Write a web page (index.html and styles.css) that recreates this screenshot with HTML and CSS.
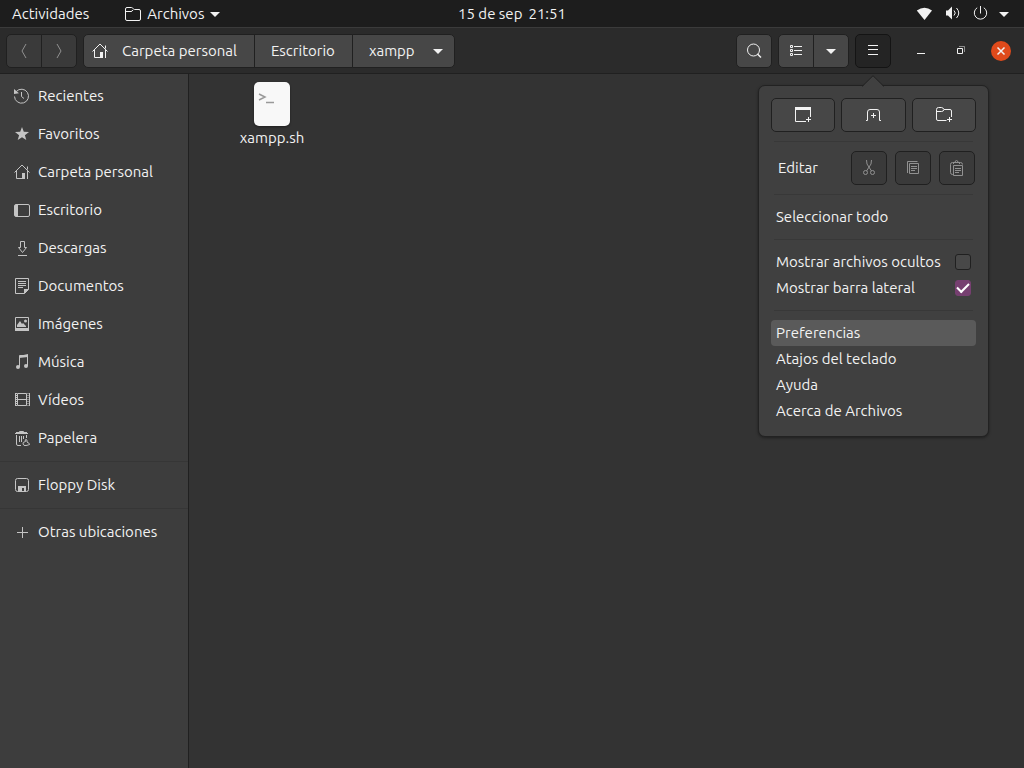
FILE: index.html
```html
<!DOCTYPE html>
<html lang="es">
<head>
<meta charset="utf-8">
<meta name="viewport" content="width=device-width, initial-scale=1">
<title>Archivos</title>
<link rel="stylesheet" href="styles.css">
</head>
<body>
<svg class="symbols" aria-hidden="true">
  <symbol id="home" viewBox="0 0 16 16">
    <path class="line" d="M.5 8.500 8 1l7.500 7.500M13.500 2.500v3M2.500 7v7.500h6M13.500 7v8"/>
    <path class="solid" d="M8 9h3v6H8z"/>
  </symbol>
  <symbol id="caret" viewBox="0 0 16 16"><path class="solid" d="M3 6h10l-5 5z"/></symbol>
</svg>

<header class="topbar">
  <div class="topbar-start">
    <button class="top-button">Actividades</button>
    <button class="top-button app-menu">
      <svg class="icon" viewBox="0 0 16 16"><path class="line" d="M2 1.500h4.500q1 0 1.500 1t1.500 1H14q1.500 0 1.500 1.500v8q0 1.500-1.500 1.500H2Q.5 14.500.5 13V3Q.5 1.500 2 1.500zM.5 5.500H6q1 0 2-1.500"/></svg>
      <span>Archivos</span>
      <svg class="icon caret-icon"><use href="#caret"/></svg>
    </button>
  </div>
  <button class="top-button clock"><span>15 de sep</span><span>21:51</span></button>
  <button class="top-button status" aria-label="Sistema">
    <svg class="icon" viewBox="0 0 16 16"><path class="solid" d="M.8 4.500Q8.500-1 16 4.500L8.500 14z"/></svg>
    <svg class="icon" viewBox="0 0 16 16"><path class="solid" d="M2 4.500h2L8 .5v13l-4-4H2z"/><path class="line" d="M10 4.500q2.500 2.500 0 5M12.500 2q4.500 5 0 10"/></svg>
    <svg class="icon" viewBox="0 0 16 16"><path class="line" d="M8.500 0v7.500M5.200 1.700a6.200 6.200 0 1 0 6.600 0"/></svg>
    <svg class="icon caret-icon"><use href="#caret"/></svg>
  </button>
</header>

<div class="headerbar">
  <div class="linked">
    <button class="button dim" aria-label="Atrás"><svg class="icon" viewBox="0 0 16 16"><path class="line" d="M10 1 6 8l4 7"/></svg></button>
    <button class="button dim" aria-label="Adelante"><svg class="icon" viewBox="0 0 16 16"><path class="line" d="m6 1 4 7-4 7"/></svg></button>
  </div>
  <nav class="linked path" aria-label="Ruta">
    <button class="button crumb crumb-home"><svg class="icon"><use href="#home"/></svg><span>Carpeta personal</span></button>
    <button class="button crumb">Escritorio</button>
    <button class="button crumb crumb-current"><span>xampp</span><svg class="icon"><use href="#caret"/></svg></button>
  </nav>
  <div class="header-end">
    <button class="button" aria-label="Buscar"><svg class="icon" viewBox="0 0 16 16"><circle class="line" cx="7.500" cy="7" r="6"/><path class="line medium" d="m11.500 11 3.500 3.500"/></svg></button>
    <div class="linked">
      <button class="button" aria-label="Vista de lista"><svg class="icon" viewBox="0 0 16 16"><path class="line" d="M2.500 2.500h2v2h-2zM2.500 6.500h2v2h-2zM2.500 10.500h2v2h-2zM6 3.500h8M6 7.500h8M6 11.500h8"/></svg></button>
      <button class="button" aria-label="Opciones de vista"><svg class="icon"><use href="#caret"/></svg></button>
    </div>
    <div class="menu-anchor">
      <button class="button active" aria-label="Menú" aria-expanded="true"><svg class="icon" viewBox="0 0 16 16"><path class="line" d="M3 2.500h10M3 6.500h10M3 11.500h10"/></svg></button>
      <section class="popover" aria-label="Menú principal">
        <svg class="arrow" viewBox="0 0 22 12"><path class="arrow-fill" d="M0 12 11 1l11 11z"/><path class="arrow-edge" d="M0 11.500 11 .7l11 10.800"/></svg>
        <div class="new-row">
          <button class="button" aria-label="Nueva ventana"><svg class="icon" viewBox="0 0 16 16"><path class="solid" d="M0 0h16v3H0z"/><path class="line" d="M.5 2v12.500H11M15.500 2v8M13.500 10v5M11 12.500h5"/></svg></button>
          <button class="button" aria-label="Nueva pestaña"><svg class="icon" viewBox="0 0 16 16"><path class="line" d="M1 13.500h1.500V5q0-2.500 2.500-2.500h7Q14.500 2.500 14.500 5v8.500H16M8.500 6v5M6 8.500h5"/></svg></button>
          <button class="button" aria-label="Nueva carpeta"><svg class="icon" viewBox="0 0 16 16"><path class="line" d="M10.500 13.500H2Q.5 13.500.5 12V2.500Q.5.5 2.500.5h3Q7 .5 8 2.500h6q1.500 0 1.500 1.500v6M.5 4.500h5q2 0 2.500-2M13.500 10v5M11 12.500h5"/></svg></button>
        </div>
        <hr class="rule">
        <div class="edit-row">
          <span>Editar</span>
          <button class="button dim" aria-label="Cortar"><svg class="icon" viewBox="0 0 16 16"><path class="line" d="m5.500 0 .5 4 4.500 7M10.500 0 10 4l-4.500 7"/><circle class="line" cx="4.500" cy="12.500" r="2"/><circle class="line" cx="11.500" cy="12.500" r="2"/></svg></button>
          <button class="button dim" aria-label="Copiar"><svg class="icon" viewBox="0 0 16 16"><path class="line" d="M2.500 13V1.500h10M4.500 3.500h9v10h-9zM6 6.500h6M6 8.500h6M6 10.500h4"/></svg></button>
          <button class="button dim" aria-label="Pegar"><svg class="icon" viewBox="0 0 16 16"><path class="line" d="M4 14.500h-.5Q1.500 14.500 1.500 12.500V4.500q0-2 2-2h8q2 0 2 2M4.500 4V2.500H6Q6 .5 7.500.5T9 2.500h1.500V4M4.500 5.500h9v10h-9zM6 8.500h6M6 10.500h6M6 12.500h4"/></svg></button>
        </div>
        <hr class="rule">
        <button class="menu-item">Seleccionar todo</button>
        <hr class="rule">
        <label class="menu-item"><span>Mostrar archivos ocultos</span><input class="check" type="checkbox"></label>
        <label class="menu-item"><span>Mostrar barra lateral</span><input class="check" type="checkbox" checked></label>
        <hr class="rule">
        <button class="menu-item selected">Preferencias</button>
        <button class="menu-item">Atajos del teclado</button>
        <button class="menu-item">Ayuda</button>
        <button class="menu-item">Acerca de Archivos</button>
      </section>
    </div>
    <div class="window-controls">
      <button class="window-button" aria-label="Minimizar"><svg class="icon" viewBox="0 0 16 16"><path class="line" d="M4 10.500h8"/></svg></button>
      <button class="window-button" aria-label="Restaurar"><svg class="icon" viewBox="0 0 16 16"><path class="line" d="M4.500 5.500h5v5h-5z"/><path class="line faint" d="M6 3.500h5.500V9"/></svg></button>
      <button class="window-button close" aria-label="Cerrar"><svg class="icon" viewBox="0 0 16 16"><path class="line medium" d="m4.500 4.500 7 7M11.500 4.500l-7 7"/></svg></button>
    </div>
  </div>
</div>

<div class="workspace">
  <nav class="sidebar" aria-label="Lugares">
    <a class="place" href="#"><svg class="icon" viewBox="0 0 16 16"><path class="line" d="M2.300 3.500A7 7 0 1 1 .5 8.500M7.500 4v4.500l2.500 2"/><path class="solid" d="M0 1v5l5-.7z"/></svg>Recientes</a>
    <a class="place" href="#"><svg class="icon" viewBox="0 0 16 16"><path class="solid" d="m8 1 1.800 4.800 5.200.2-4.100 3.200L12.300 14 8 11.300 3.700 14l1.400-4.800L1 6l5.200-.2z"/></svg>Favoritos</a>
    <a class="place" href="#"><svg class="icon"><use href="#home"/></svg>Carpeta personal</a>
    <a class="place" href="#"><svg class="icon" viewBox="0 0 16 16"><rect class="line" x=".5" y="2.500" width="15" height="12" rx="1.500"/><path class="solid" d="M1 3h3v11H1z"/></svg>Escritorio</a>
    <a class="place" href="#"><svg class="icon" viewBox="0 0 16 16"><path class="line" d="M6.500 1.500h4v6h2l-4 5-4-5h2zM4 15.500h9"/></svg>Descargas</a>
    <a class="place" href="#"><svg class="icon" viewBox="0 0 16 16"><path class="line" d="M1.500.5h13v11l-4 4h-9zM4 3.500h8M4 5.500h8M4 7.500h8M4 9.500h5"/><path class="solid" d="M10 11h5l-5 5z"/></svg>Documentos</a>
    <a class="place" href="#"><svg class="icon" viewBox="0 0 16 16"><path class="line" d="M1.500 1.500h13v13h-13z"/><path class="solid" d="M1 12h14v3H1zM3 11V9l3-4 2 3 1-1 3 3v1z"/><circle class="solid" cx="11.500" cy="5" r="1.500"/></svg>Imágenes</a>
    <a class="place" href="#"><svg class="icon" viewBox="0 0 16 16"><path class="line" d="M5.500 13V1.500h8V12"/><path class="solid" d="m5 2 9-2v3L5 4z"/><circle class="solid" cx="4" cy="13" r="2"/><circle class="solid" cx="12" cy="12" r="2"/></svg>Música</a>
    <a class="place" href="#"><svg class="icon" viewBox="0 0 16 16"><path class="line" d="M3.500 1.500h9v12h-9zM3.500 7.500h9M1.500 1v13M15.500 1v13"/><path class="line dots" d="M2.500 1v13M14 1v13"/></svg>Vídeos</a>
    <a class="place" href="#"><svg class="icon" viewBox="0 0 16 16"><path class="line" d="M1 3.500h13M5.500 3V1.500h4V3M2.500 5v9q0 1.500 1.500 1.500h3M5.500 6v6M7.500 6v6M9.500 6v3M12.500 5v3"/><path class="solid" d="M2 2h11v2H2z"/><path class="line" d="M12 9.500q-1.500 0-.5 2-3 .5-2.500 2.500t3 1.500 3.500-1-2.500-2.500q.5-2.500-1-2.500z"/></svg>Papelera</a>
    <hr class="divider">
    <a class="place" href="#"><svg class="icon" viewBox="0 0 16 16"><rect class="line" x="1.500" y="1.500" width="13" height="13" rx="2"/><path class="solid" d="M4 9h8v6h-2v-4H8v4H4z"/></svg>Floppy Disk</a>
    <hr class="divider">
    <a class="place" href="#"><svg class="icon" viewBox="0 0 16 16"><path class="line" d="M8.500 3v11M3 8.500h11"/></svg>Otras ubicaciones</a>
  </nav>
  <main class="files">
    <a class="file" href="#">
      <svg class="file-icon" viewBox="0 0 36 44"><rect class="paper" width="36" height="44" rx="5"/><path class="prompt" d="m5 12 6 3-6 3M12 20.500h8"/></svg>
      <span>xampp.sh</span>
    </a>
  </main>
</div>
</body>
</html>
```

FILE: styles.css
```css
* { box-sizing: border-box; }

body {
  margin: 0;
  min-height: 100vh;
  display: flex;
  flex-direction: column;
  background: #333333;
  color: #f2f2f2;
  font: 15px/20px Ubuntu, "Noto Sans", sans-serif;
}

button {
  font: inherit;
  color: inherit;
  background: none;
  border: 0;
  padding: 0;
}

a { color: inherit; text-decoration: none; }

.symbols { position: absolute; width: 0; height: 0; }

.icon { display: block; flex: none; width: 16px; height: 16px; }
.line { fill: none; stroke: currentColor; stroke-width: 1; }
.medium { stroke-width: 1.5; }
.faint { opacity: .5; }
.dots { stroke-dasharray: 1 1; }
.solid { fill: currentColor; }

.topbar {
  display: grid;
  grid-template-columns: 1fr auto 1fr;
  align-items: center;
  height: 27px;
  padding: 0 12px;
  background: #1d1d1d;
}
.topbar-start, .top-button { display: flex; align-items: center; }
.topbar-start { gap: 36px; }
.app-menu { gap: 6px; }
.app-menu .caret-icon { margin-left: -3px; }
.clock { gap: 6px; }
.status { justify-self: end; gap: 12px; }
.status .caret-icon { margin-left: -4px; }

.headerbar {
  display: flex;
  align-items: center;
  gap: 6px;
  height: 47px;
  padding: 0 6px;
  background: #2b2b2b;
  border-top: 1px solid #3b3b3b;
  border-bottom: 1px solid #202020;
}

.button {
  display: flex;
  align-items: center;
  justify-content: center;
  min-width: 36px;
  height: 34px;
  background: #474747;
  border: 1px solid #202020;
  border-radius: 5px;
}
.button.dim { background: #3a3a3a; color: #919191; }
.button.active { background: #242424; border-color: #141414; }

.linked { display: flex; }
.linked .button + .button { margin-left: -1px; }
.linked .button:not(:last-child) { border-top-right-radius: 0; border-bottom-right-radius: 0; }
.linked .button:not(:first-child) { border-top-left-radius: 0; border-bottom-left-radius: 0; }

.crumb { padding: 0 17px 0 16px; }
.crumb-home { padding-left: 8px; gap: 14px; }
.crumb-current { padding-right: 8px; gap: 15px; }

.header-end { display: flex; align-items: center; gap: 6px; margin-left: auto; }
.menu-anchor { position: relative; }

.window-controls { display: flex; gap: 20px; margin: 0 7px 0 14px; }
.window-button {
  display: flex;
  align-items: center;
  justify-content: center;
  width: 20px;
  height: 20px;
  border-radius: 50%;
}
.window-button.close { background: #e04a1b; }

.popover {
  position: absolute;
  z-index: 1;
  top: 51px;
  left: -97px;
  width: 231px;
  padding: 12px;
  background: #404040;
  border: 1px solid #222222;
  border-radius: 7px;
  box-shadow: 0 1px 3px rgba(0, 0, 0, .4);
}
.arrow { position: absolute; top: -11px; left: 103px; width: 22px; height: 12px; }
.arrow-fill { fill: #404040; }
.arrow-edge { fill: none; stroke: #222222; }

.new-row { display: grid; grid-template-columns: repeat(3, 1fr); gap: 6px; }
.edit-row { display: flex; align-items: center; gap: 8px; padding: 0 1px 0 7px; }
.edit-row span { margin-right: auto; }

.rule { height: 1px; margin: 9px 3px; border: 0; background: #383838; }

.menu-item {
  display: flex;
  align-items: center;
  justify-content: space-between;
  width: 100%;
  height: 26px;
  padding: 0 5px;
  border-radius: 4px;
  white-space: nowrap;
}
.menu-item.selected { background: #5a5a5a; }

.check {
  appearance: none;
  flex: none;
  width: 16px;
  height: 16px;
  margin: 0;
  background: #484848;
  border: 1px solid #202020;
  border-radius: 3px;
}
.check:checked { display: grid; place-items: center; background: #763f70; border-color: #763f70; }
.check:checked::before {
  content: "";
  width: 10px;
  height: 5px;
  margin-bottom: 3px;
  border: solid #ffffff;
  border-width: 0 0 2px 2px;
  transform: rotate(-45deg);
}

.workspace { display: flex; flex: 1; }

.sidebar {
  flex: none;
  width: 189px;
  padding-top: 3px;
  background: #3d3d3d;
  border-right: 1px solid #202020;
}
.place { display: flex; align-items: center; gap: 8px; height: 38px; padding-left: 14px; }
.place .icon { color: #c4c4c4; }
.divider { height: 1px; margin: 4px 0; border: 0; background: #363636; }

.files { flex: 1; padding: 8px 24px; }
.file { display: inline-flex; flex-direction: column; align-items: center; gap: 2px; width: 118px; }
.file-icon { width: 36px; height: 44px; filter: drop-shadow(0 1px 1px rgba(0, 0, 0, .4)); }
.paper { fill: #f8f8f8; }
.prompt { fill: none; stroke: #999999; stroke-width: 1.5; }
```
